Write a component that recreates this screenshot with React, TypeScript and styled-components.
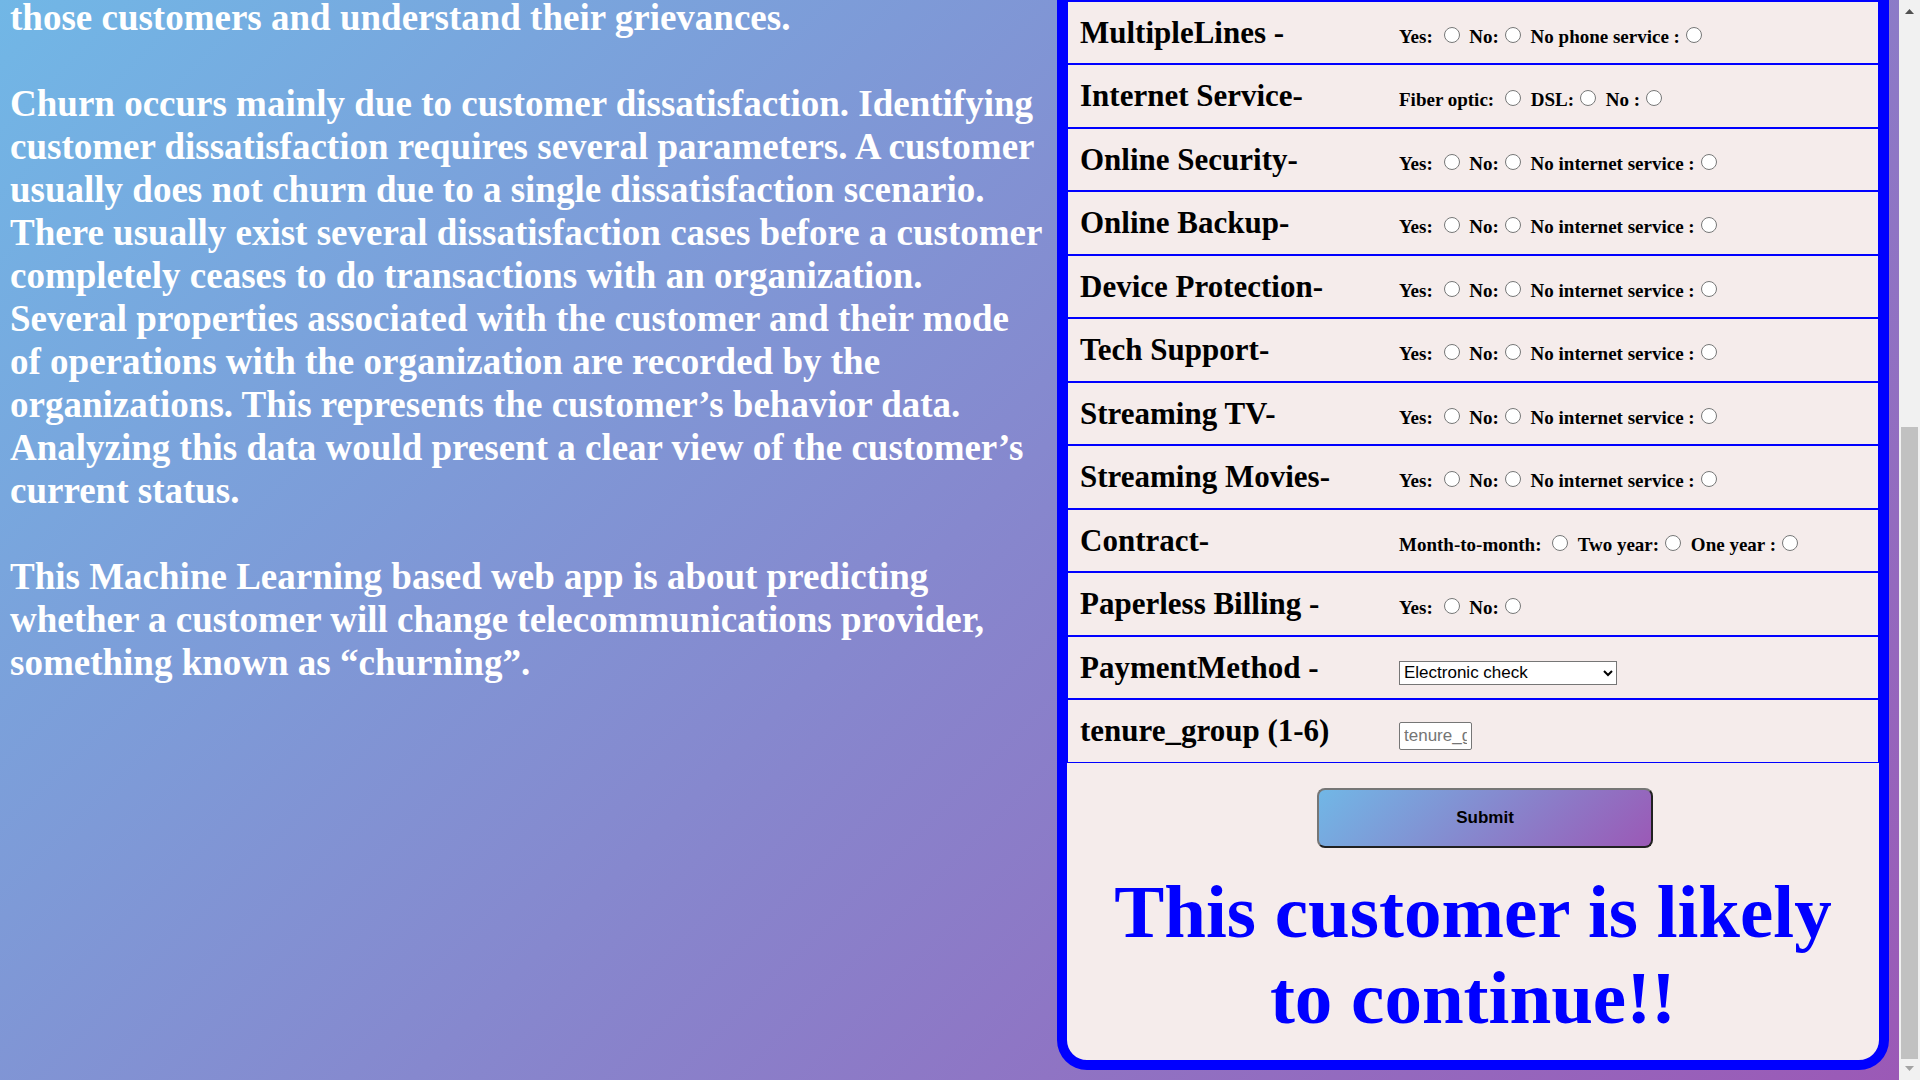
import React from "react";
import styled, { createGlobalStyle } from "styled-components";

const GlobalStyle = createGlobalStyle`
  * { box-sizing: border-box; }
  body {
    margin: 0;
    font-family: "Liberation Serif", "Times New Roman", serif;
  }
`;

const Screen = styled.div`
  display: grid;
  grid-template-columns: minmax(0, 1fr) 21px;
  height: 100vh;
  overflow: hidden;
`;

const Page = styled.main`
  display: grid;
  grid-template-columns: minmax(0, 1057fr) minmax(0, 832fr);
  align-items: start;
  height: 100vh;
  padding-right: 10px;
  overflow: hidden;
  background: linear-gradient(135deg, #71b7e6, #9b59b6);
`;

const About = styled.section`
  display: flex;
  flex-direction: column;
  gap: 43px;
  margin-top: -4px;
  padding-left: 10px;
  color: #fff;
`;

const Paragraph = styled.p`
  margin: 0;
  font-size: 37px;
  line-height: 43px;
  font-weight: bold;
`;

const Panel = styled.form`
  border: 10px solid blue;
  border-top-width: 1px;
  border-radius: 0 0 30px 30px;
  padding-bottom: 19px;
  background: #f5eceb;
`;

const Rows = styled.div`
  display: grid;
  grid-template-rows: repeat(6, 63px 64px);
`;

const Row = styled.div`
  display: grid;
  grid-template-columns: 319px minmax(0, 1fr);
  align-items: baseline;
  padding: 13px 12px 0;
  border: 1px solid blue;
`;

const RowTitle = styled.label`
  font-size: 31px;
  line-height: 36px;
  font-weight: bold;
  color: #000;
`;

const Options = styled.div`
  font-size: 19px;
  line-height: 22px;
  font-weight: bold;
  white-space: nowrap;
`;

const Radio = styled.input`
  width: 16px;
  height: 16px;
  margin: 4px 5px 0 6px;
  vertical-align: baseline;
`;

const Select = styled.select`
  width: 218px;
  height: 24px;
  border: 1px solid #767676;
  background-color: #fff;
  color: #000;
  font-family: "Liberation Sans", Arial, sans-serif;
  font-size: 17px;
`;

const TextBox = styled.input`
  width: 73px;
  height: 28px;
  padding: 1px 4px;
  border: 1px solid #767676;
  border-radius: 2px;
  font-family: "Liberation Sans", Arial, sans-serif;
  font-size: 17px;

  &::placeholder { color: #757575; }
`;

const Submit = styled.button`
  display: block;
  width: 336px;
  height: 60px;
  margin: 25px 0 0 250px;
  border: 2px solid;
  border-color: #767676 #212121 #212121 #767676;
  border-radius: 8px;
  background: linear-gradient(135deg, #71b7e6, #9b59b6);
  color: #000;
  font-family: "Liberation Sans", Arial, sans-serif;
  font-size: 17px;
  font-weight: bold;
`;

const Result = styled.h1`
  margin: 21px 0 0;
  padding: 0 40px;
  color: blue;
  font-size: 75px;
  line-height: 86px;
  text-align: center;
`;

const ScrollRail = styled.div`
  display: flex;
  flex-direction: column;
  background: #f1f1f1;
`;

const ScrollArrow = styled.svg`
  flex: none;
  width: 21px;
  height: 21px;
`;

const ScrollTrack = styled.div`
  flex: 1;
  display: grid;
  grid-template-rows: 406fr 632fr;
  padding: 0 2px;
`;

const ScrollThumb = styled.div`
  grid-row: 2;
  background: #c1c1c1;
`;

const INTERNET = ["Yes: ", "No:", "No internet service :"];

const QUESTIONS: { id: string; title: string; options: string[] }[] = [
  { id: "lines", title: "MultipleLines -", options: ["Yes: ", "No:", "No phone service :"] },
  { id: "internet", title: "Internet Service-", options: ["Fiber optic: ", "DSL:", "No :"] },
  { id: "security", title: "Online Security-", options: INTERNET },
  { id: "backup", title: "Online Backup-", options: INTERNET },
  { id: "protection", title: "Device Protection-", options: INTERNET },
  { id: "support", title: "Tech Support-", options: INTERNET },
  { id: "tv", title: "Streaming TV-", options: INTERNET },
  { id: "movies", title: "Streaming Movies-", options: INTERNET },
  { id: "contract", title: "Contract-", options: ["Month-to-month: ", "Two year:", "One year :"] },
  { id: "billing", title: "Paperless Billing -", options: ["Yes: ", "No:"] },
];

function Question({ id, title, options }: { id: string; title: string; options: string[] }) {
  return (
    <Row role="radiogroup" aria-labelledby={`${id}-title`}>
      <RowTitle as="span" id={`${id}-title`}>{title}</RowTitle>
      <Options>
        {options.map((text) => (
          <React.Fragment key={text}>
            <label>
              {text}
              <Radio type="radio" name={id} value={text} />
            </label>{" "}
          </React.Fragment>
        ))}
      </Options>
    </Row>
  );
}

export default function App() {
  return (
    <Screen>
      <GlobalStyle />
      <Page>
        <About>
          <Paragraph>those customers and understand their grievances.</Paragraph>
          <Paragraph>
            Churn occurs mainly due to customer dissatisfaction. Identifying customer
            dissatisfaction requires several parameters. A customer usually does not churn due to
            a single dissatisfaction scenario.<br />
            There usually exist several dissatisfaction cases before a customer completely ceases
            to do transactions with an organization.<br />
            Several properties associated with the customer and their mode<br />
            of operations with the organization are recorded by the organizations. This represents
            the customer’s behavior data.<br />
            Analyzing this data would present a clear view of the customer’s current status.
          </Paragraph>
          <Paragraph>
            This Machine Learning based web app is about predicting<br />
            whether a customer will change telecommunications provider, something known as
            “churning”.
          </Paragraph>
        </About>
        <Panel onSubmit={(e) => e.preventDefault()}>
          <Rows>
            {QUESTIONS.map((q) => (
              <Question key={q.id} {...q} />
            ))}
            <Row>
              <RowTitle htmlFor="payment">PaymentMethod -</RowTitle>
              <Options>
                <Select id="payment" defaultValue="Electronic check">
                  <option>Electronic check</option>
                  <option>Mailed check</option>
                  <option>Bank transfer</option>
                  <option>Credit card</option>
                </Select>
              </Options>
            </Row>
            <Row>
              <RowTitle htmlFor="tenure">tenure_group (1-6)</RowTitle>
              <Options>
                <TextBox id="tenure" type="text" placeholder="tenure_group" />
              </Options>
            </Row>
          </Rows>
          <Submit type="submit">Submit</Submit>
          <Result>This customer is likely to continue!!</Result>
        </Panel>
      </Page>
      <ScrollRail aria-hidden="true">
        <ScrollArrow viewBox="0 0 21 21">
          <path d="M6 14 L10.5 9 L15 14 Z" fill="#505050" />
        </ScrollArrow>
        <ScrollTrack>
          <ScrollThumb />
        </ScrollTrack>
        <ScrollArrow viewBox="0 0 21 21">
          <path d="M6 7 L10.5 12 L15 7 Z" fill="#a3a3a3" />
        </ScrollArrow>
      </ScrollRail>
    </Screen>
  );
}
